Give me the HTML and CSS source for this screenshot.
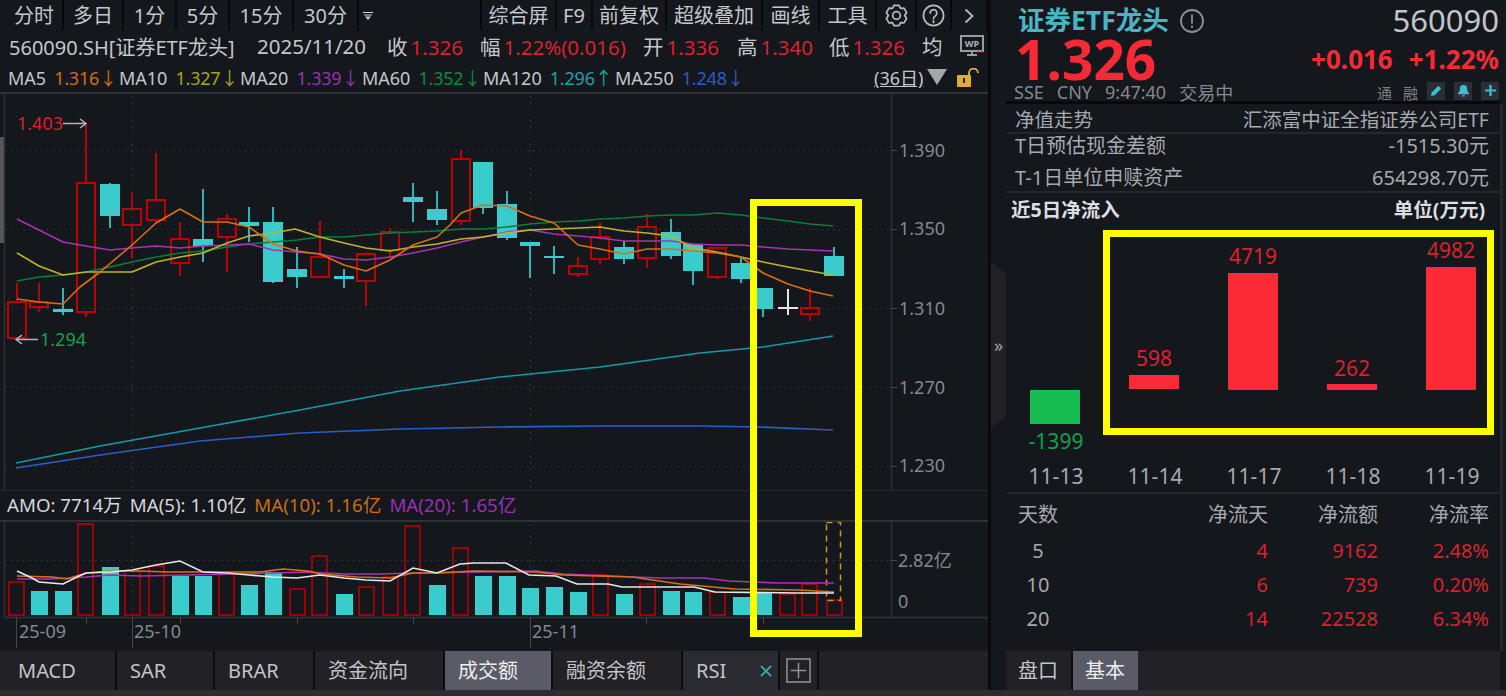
FILE: index.html
```html
<!DOCTYPE html>
<html lang="zh-CN">
<head>
<meta charset="utf-8">
<title>证券ETF龙头 560090</title>
<link rel="stylesheet" href="styles.css">
</head>
<body>
<div class="page">
  <main class="main">
    <section class="left">
      <nav class="toolbar">
        <span class="tool">分时</span><span class="tool">多日</span><span class="tool">1分</span><span class="tool">5分</span><span class="tool">15分</span><span class="tool">30分</span>
        <span class="tool tool-menu"><svg class="ico-menu" viewBox="0 0 10 8"><path d="M0 0.5h10M1 3h8"/><path class="fill" d="M2 4.5h6L5 8z"/></svg></span>
        <span class="tool tool-blank"></span>
        <span class="tool">综合屏</span><span class="tool">F9</span><span class="tool">前复权</span><span class="tool">超级叠加</span><span class="tool">画线</span><span class="tool">工具</span>
        <span class="tool"><svg class="ico-24" viewBox="0 0 24 24"><path d="M9.34 1.33L14.66 1.33 16.25 4.64 19.91 4.36 22.57 8.97 20.5 12 22.57 15.03 19.91 19.64 16.25 19.36 14.66 22.67 9.34 22.67 7.75 19.36 4.09 19.64 1.43 15.03 3.5 12 1.43 8.97 4.09 4.36 7.75 4.64z"/><circle cx="12" cy="12" r="4"/></svg></span>
        <span class="tool"><svg class="ico-24" viewBox="0 0 24 24"><circle cx="12" cy="12" r="10.5"/><path d="M8.5 9.5a3.5 3.5 0 1 1 5.4 2.9c-1.3.8-1.9 1.5-1.9 3"/><path d="M12 17.5v1.8"/></svg></span>
        <span class="tool"><svg class="ico-chev" viewBox="0 0 10 16"><path d="M1.5 1.5L8.5 8 1.5 14.5"/></svg></span>
      </nav>

      <div class="quote">
        <span class="code">560090.SH[证券ETF龙头]</span>
        <span class="date">2025/11/20</span>
        <span class="kv kv-close">收<b>1.326</b></span>
        <span class="kv kv-amp">幅<b>1.22%(0.016)</b></span>
        <span class="kv kv-open">开<b>1.336</b></span>
        <span class="kv kv-high">高<b>1.340</b></span>
        <span class="kv kv-low">低<b>1.326</b></span>
        <span class="kv kv-avg">均</span>
        <svg class="ico-wp" viewBox="0 0 24 23"><rect x="1" y="1" width="22" height="15"/><path d="M7 20h10M12 16v4"/><text x="12" y="12">WP</text><path class="wp-dots" d="M17 17h2M21 17h2"/></svg>
      </div>

      <div class="ma-row">
        <span class="ma ma-5">MA5<b>1.316↓</b></span>
        <span class="ma ma-10">MA10<b>1.327↓</b></span>
        <span class="ma ma-20">MA20<b>1.339↓</b></span>
        <span class="ma ma-60">MA60<b>1.352↓</b></span>
        <span class="ma ma-120">MA120<b>1.296↑</b></span>
        <span class="ma ma-250">MA250<b>1.248↓</b></span>
        <span class="days">(36日)</span>
        <svg class="ico-tri" viewBox="0 0 20 16"><path d="M0 0h20L10 16z"/></svg>
        <svg class="ico-lock" viewBox="0 0 23 19"><path class="shackle" d="M12 7V5a4.5 4.5 0 0 1 9 0"/><rect class="body" x="0" y="7" width="14" height="12" rx="1"/><rect class="hole" x="6" y="10" width="2" height="5"/></svg>
      </div>

      <svg class="chart-main" viewBox="0 94 988 396">
        <rect class="scroll" x="0" y="137" width="4" height="106"/>
        <path class="frame" d="M4.5 94V490M891.5 94V490"/>
        <path class="grid" d="M5 150.5H891M5 229.5H891M5 308.5H891M5 387.5H891M5 466.5H891M132.5 96V490M530.5 96V490"/>
        <path class="tick" d="M891 150.5h6M891 229.5h6M891 308.5h6M891 387.5h6M891 466.5h6"/>
        <text class="axis" x="899" y="157">1.390</text>
        <text class="axis" x="899" y="235">1.350</text>
        <text class="axis" x="899" y="315">1.310</text>
        <text class="axis" x="899" y="394">1.270</text>
        <text class="axis" x="899" y="472">1.230</text>

        <g class="c-red">
          <path d="M17 283V302M39 283V302M39 307V312M86 123V183M86 312V317M132 193V209M132 225V258M156 153V200M156 220V223M180 222V239M180 263V276M227 214V219M227 237V272M320 221V257M366 252V254M366 281V306M390 228V232M390 250V258M461 150V159M461 221V225M578 257V266M578 274V277M600 222V237M600 259V265M647 214V227M647 258V268M717 277V279M810 288V308M810 314V321"/>
          <rect x="8" y="302" width="18" height="36"/><rect x="30" y="302" width="18" height="5"/><rect x="77" y="183" width="18" height="129"/><rect x="123" y="209" width="18" height="16"/><rect x="147" y="200" width="18" height="20"/><rect x="171" y="239" width="18" height="24"/><rect x="218" y="219" width="18" height="18"/><rect x="311" y="257" width="18" height="20"/><rect x="357" y="254" width="18" height="27"/><rect x="381" y="232" width="18" height="18"/><rect x="452" y="159" width="18" height="62"/><rect x="569" y="266" width="18" height="8"/><rect x="591" y="237" width="18" height="22"/><rect x="638" y="227" width="18" height="31"/><rect x="708" y="248" width="18" height="29"/><rect x="801" y="308" width="18" height="6"/>
        </g>
        <g class="c-teal">
          <path d="M63 288V315M110 183V228M203 189V262M249 207V242M273 207V283M297 247V288M344 269V288M413 183V222M437 191V225M483 162V214M507 191V240M530 242V278M554 246V274M624 241V264M671 219V259M693 244V285M741 258V283M763 288V317M834 247V276"/>
          <rect x="53" y="309" width="20" height="3"/><rect x="100" y="184" width="20" height="32"/><rect x="193" y="239" width="20" height="7"/><rect x="239" y="222" width="20" height="4"/><rect x="263" y="222" width="20" height="60"/><rect x="287" y="269" width="20" height="8"/><rect x="334" y="276" width="20" height="3"/><rect x="403" y="197" width="20" height="5"/><rect x="427" y="209" width="20" height="11"/><rect x="473" y="162" width="20" height="46"/><rect x="497" y="204" width="20" height="34"/><rect x="520" y="242" width="20" height="4"/><rect x="544" y="256" width="20" height="2"/><rect x="614" y="247" width="20" height="12"/><rect x="661" y="232" width="20" height="24"/><rect x="683" y="244" width="20" height="27"/><rect x="731" y="263" width="20" height="16"/><rect x="753" y="288" width="20" height="21"/><rect x="824" y="256" width="20" height="20"/>
        </g>
        <path class="c-white" d="M778 308H798M788 289V315"/>

        <polyline class="l l-60" points="17,281 39,277 63,275 86,272 110,267 132,262 156,257 180,253 203,251 227,247 249,244 273,242 297,240 320,237 344,237 366,235 390,233 413,232 437,231 461,229 483,229 507,227 530,224 554,222 578,221 600,219 624,218 647,216 671,215 693,215 717,213 741,215 763,218 788,221 810,224 833,226"/>
        <polyline class="l l-20" points="17,219 39,230 63,242 86,246 110,250 132,248 156,246 180,248 203,246 227,245 249,244 273,250 297,252 320,254 344,259 366,260 390,257 413,253 437,248 461,242 483,237 507,232 530,230 554,234 578,236 600,238 624,241 647,241 671,241 693,244 717,245 741,245 763,247 788,249 810,250 833,251"/>
        <polyline class="l l-10" points="17,253 39,266 63,275 86,272 110,272 132,272 156,262 180,257 203,253 227,243 249,236 273,233 295,229 320,237 344,243 366,248 390,251 413,247 437,244 461,239 483,237 507,233 530,230 554,229 578,228 600,227 624,231 647,233 671,236 693,248 717,252 741,257 763,262 788,267 810,271 833,275"/>
        <polyline class="l l-5" points="17,299 39,302 63,304 80,287 100,272 132,245 156,223 180,209 203,222 227,222 249,227 273,244 297,251 320,254 344,265 366,271 390,260 413,245 437,237 450,225 461,213 483,205 507,206 530,216 554,223 578,245 600,249 624,254 647,249 671,249 693,251 717,253 741,257 763,273 788,284 810,291 833,296"/>
        <polyline class="l l-120" points="16,463 100,446 200,428 300,410 400,391 500,377 600,367 700,353 763,347 833,336"/>
        <polyline class="l l-250" points="16,468 100,455 200,441 300,433 400,429 500,427 600,426 700,426 760,427 833,430"/>

        <text class="mark mark-red" x="17" y="130">1.403</text>
        <path class="arrow" d="M63 123.5H86M80 119l6 4.500-6 4.500"/>
        <path class="arrow" d="M38 339.500H16M22 335l-6 4.500 6 4.500"/>
        <text class="mark mark-green" x="40" y="346">1.294</text>
      </svg>

      <div class="amo">
        <span class="amo-w">AMO: 7714万</span>
        <span class="amo-w">MA(5): 1.10亿</span>
        <span class="amo-o">MA(10): 1.16亿</span>
        <span class="amo-p">MA(20): 1.65亿</span>
      </div>

      <svg class="chart-vol" viewBox="0 522 988 129">
        <path class="frame" d="M4.5 522V617M891.5 522V617M4 617.500H988"/>
        <path class="grid" d="M5 560.500H891M132.500 524V616M530.500 524V616"/>
        <path class="tick" d="M891 560.500h6M86.500 618v6M180.500 618v6M297.500 618v6M413.500 618v6M646.500 618v6M763.500 618v6M16.500 617v31M132.500 617v31M530.500 617v31"/>
        <g class="v-red">
          <rect x="9" y="582" width="15" height="33"/><rect x="78" y="524" width="15" height="91"/><rect x="125" y="571" width="15" height="44"/><rect x="149" y="566" width="15" height="49"/><rect x="219" y="573" width="15" height="42"/><rect x="290" y="589" width="15" height="26"/><rect x="312" y="556" width="15" height="59"/><rect x="359" y="587" width="15" height="28"/><rect x="383" y="577" width="15" height="38"/><rect x="405" y="526" width="15" height="89"/><rect x="453" y="548" width="15" height="67"/><rect x="593" y="575" width="15" height="40"/><rect x="640" y="584" width="15" height="31"/><rect x="710" y="592" width="15" height="23"/><rect x="780" y="594" width="15" height="21"/><rect x="802" y="584" width="15" height="31"/><rect x="827" y="600" width="15" height="15"/>
        </g>
        <g class="v-teal">
          <rect x="31" y="591" width="17" height="24"/><rect x="55" y="591" width="17" height="24"/><rect x="102" y="567" width="17" height="48"/><rect x="172" y="576" width="17" height="39"/><rect x="195" y="576" width="17" height="39"/><rect x="241" y="585" width="17" height="30"/><rect x="265" y="572" width="17" height="43"/><rect x="336" y="594" width="17" height="21"/><rect x="429" y="585" width="17" height="30"/><rect x="475" y="576" width="17" height="39"/><rect x="499" y="576" width="17" height="39"/><rect x="522" y="588" width="17" height="27"/><rect x="546" y="587" width="17" height="28"/><rect x="570" y="592" width="17" height="23"/><rect x="616" y="594" width="17" height="21"/><rect x="663" y="591" width="17" height="24"/><rect x="685" y="592" width="17" height="23"/><rect x="733" y="597" width="17" height="18"/><rect x="755" y="592" width="17" height="23"/>
        </g>
        <rect class="v-dash" x="826.500" y="522.500" width="14" height="78"/>
        <polyline class="v v-p" points="17,579 50,579 86,577 110,575 140,576 233,574 308,572 344,574 380,574 413,573 480,572 536,571 563,574 612,576 660,578 704,578 729,581 777,583 834,583"/>
        <polyline class="v v-o" points="17,576 52,577 67,579 86,573 110,571 140,571 167,572 260,572 283,569 308,571 320,574 357,577 390,578 413,573 437,573 474,571 536,572 563,575 632,577 680,584 735,589 799,590 834,592"/>
        <polyline class="v v-w" points="17,571 32,578 39,582 63,584 77,577 86,573 110,572 132,570 156,565 180,561 203,572 227,573 249,575 273,577 297,578 320,575 344,578 366,580 390,581 413,568 437,573 460,564 474,563 506,563 529,575 556,576 577,584 608,584 622,587 694,587 715,592 799,593 834,593"/>
        <text class="axis" x="898" y="567">2.82亿</text>
        <text class="axis" x="898" y="608">0</text>
        <text class="axis" x="19" y="638">25-09</text>
        <text class="axis" x="134" y="638">25-10</text>
        <text class="axis" x="532" y="638">25-11</text>
      </svg>

      <nav class="tabs tabs-left">
        <span class="tab">MACD</span><span class="tab">SAR</span><span class="tab">BRAR</span><span class="tab">资金流向</span><span class="tab tab-on">成交额</span><span class="tab">融资余额</span>
        <span class="tab tab-rsi">RSI<svg class="ico-x" viewBox="0 0 12 12"><path d="M1 1l10 10M11 1L1 11"/></svg></span>
        <span class="tab tab-plus"><svg class="ico-plus" viewBox="0 0 26 26"><rect x="1" y="1" width="24" height="24"/><path d="M13 5v16M5 13h16"/></svg></span>
      </nav>
    </section>

    <div class="gutter">
      <div class="handle">»</div>
    </div>

    <section class="right">
      <header class="head">
        <div class="head-top">
          <h1 class="title">证券ETF龙头</h1>
          <svg class="ico-info" viewBox="0 0 24 24"><circle cx="12" cy="12" r="11"/><path d="M12 5.500v9M12 16.500v2.500"/></svg>
          <span class="symbol">560090</span>
        </div>
        <div class="head-mid">
          <span class="price">1.326</span>
          <span class="chg">+0.016</span>
          <span class="chg">+1.22%</span>
        </div>
        <div class="head-low">
          <span>SSE</span><span>CNY</span><span>9:47:40</span><span>交易中</span>
          <span class="tag tag-a">通</span><span class="tag">融</span>
          <span class="btn"><svg viewBox="0 0 14 14"><path d="M1 13l1-4 7-7 3 3-7 7z"/></svg></span>
          <span class="btn"><svg viewBox="0 0 14 14"><path d="M7 1c3 0 4 2 4 5 0 2 1 3 2 4v1H1v-1c1-1 2-2 2-4 0-3 1-5 4-5zM5.500 12h3v1.500h-3z"/></svg></span>
          <span class="btn"><svg viewBox="0 0 14 14"><path d="M5.800 1h2.400v4.800H13v2.400H8.200V13H5.800V8.200H1V5.800h4.800z"/></svg></span>
        </div>
      </header>

      <div class="sub">
        <div class="row row-nav"><span>净值走势</span><span>汇添富中证全指证券公司ETF</span></div>
        <div class="row row-a"><span>T日预估现金差额</span><span>-1515.30元</span></div>
        <div class="row row-b"><span>T-1日单位申赎资产</span><span>654298.70元</span></div>
        <div class="row row-bold"><span>近5日净流入</span><span>单位(万元)</span></div>

        <svg class="flow" viewBox="1006 225 494 267">
          <rect class="up" x="1129" y="375" width="50" height="14"/>
          <rect class="up" x="1228" y="273" width="50" height="117"/>
          <rect class="up" x="1327" y="384" width="50" height="6"/>
          <rect class="up" x="1426" y="267" width="50" height="123"/>
          <rect class="down" x="1030" y="390" width="50" height="34"/>
          <text class="val val-up" x="1154" y="366">598</text>
          <text class="val val-up" x="1253" y="264">4719</text>
          <text class="val val-up" x="1352" y="376">262</text>
          <text class="val val-up" x="1451" y="258">4982</text>
          <text class="val val-down" x="1056" y="449">-1399</text>
          <text class="day" x="1056" y="484">11-13</text>
          <text class="day" x="1155" y="484">11-14</text>
          <text class="day" x="1254" y="484">11-17</text>
          <text class="day" x="1353" y="484">11-18</text>
          <text class="day" x="1452" y="484">11-19</text>
        </svg>

        <div class="table">
          <span class="th first">天数</span><span class="th">净流天</span><span class="th">净流额</span><span class="th">净流率</span>
          <span class="td first">5</span><span class="td">4</span><span class="td">9162</span><span class="td">2.48%</span>
          <span class="td first">10</span><span class="td">6</span><span class="td">739</span><span class="td">0.20%</span>
          <span class="td first">20</span><span class="td">14</span><span class="td">22528</span><span class="td">6.34%</span>
        </div>
      </div>

      <nav class="tabs tabs-right">
        <span class="tab">盘口</span><span class="tab tab-on">基本</span>
      </nav>
    </section>
  </main>
  <div class="strip"></div>

  <div class="note note-left"></div>
  <div class="note note-right"></div>
</div>
</body>
</html>
```

FILE: styles.css
```css
* { box-sizing: border-box; }
html, body { margin: 0; padding: 0; }
body {
  width: 1506px;
  height: 696px;
  overflow: hidden;
  background: #14171c;
  color: #c4c7cc;
  font-family: "Noto Sans", "Noto Sans CJK SC", sans-serif;
}
.page { position: relative; width: 1506px; height: 696px; display: flex; flex-direction: column; }
.main { display: flex; height: 690px; }
.strip { height: 6px; background: #2b2d33; }

/* left column */
.left { width: 988px; display: flex; flex-direction: column; }
.toolbar {
  height: 30px;
  display: grid;
  grid-template-columns: 64px 60px 53px 53px 64px 65px 18px 105px 75px 36px 74px 96px 57px 57px 40px 35px 36px;
  font-size: 20px;
  color: #c4c7cc;
}
.tool {
  display: flex; align-items: center; justify-content: center;
  border-right: 2px solid #08090b;
  line-height: 1;
  padding-top: 1px;
  white-space: nowrap;
}
.tool:first-child { padding-left: 6px; }
.tool-menu { border-right: 0; }
.ico-menu { width: 10px; height: 8px; }
.ico-menu path { stroke: #d0d0d0; fill: none; stroke-width: 1; }
.ico-menu path.fill { fill: #d0d0d0; stroke: none; }
.ico-24 { width: 23px; height: 23px; fill: none; stroke: #b8babd; stroke-width: 1.800; stroke-linejoin: round; stroke-linecap: round; }
.ico-chev { width: 10px; height: 16px; fill: none; stroke: #b8babd; stroke-width: 1.800; }

.quote {
  height: 32px; display: flex; align-items: center; font-size: 20.500px; padding-left: 9px; white-space: nowrap;
}
.quote b, .ma b { font-weight: 400; }
.quote b { color: #d9212c; margin-left: 3px; }
.code { width: 248px; font-size: 20px; }
.date { width: 130px; }
.kv { display: block; }
.kv-close { width: 93px; }
.kv-amp { width: 163px; }
.kv-open { width: 94px; }
.kv-high { width: 92px; }
.kv-low { width: 93px; }
.kv-avg { width: 38px; }
.ico-wp { width: 24px; height: 23px; fill: none; stroke: #9a9ca0; stroke-width: 2; }
.ico-wp text { font-size: 9px; font-weight: 700; fill: #b0b2b5; stroke: none; text-anchor: middle; }
.ico-wp .wp-dots { stroke: #c8252c; stroke-width: 1.500; }

.ma-row {
  height: 32px; display: flex; align-items: center; font-size: 18px; padding-left: 8px; white-space: nowrap;
  border-bottom: 2px solid #2f3136;
}
.ma { display: block; }
.ma b { margin-left: 8px; letter-spacing: -0.200px; }
.ma-5 { width: 111px; }
.ma-5 b { color: #d26f0c; }
.ma-10 { width: 121px; }
.ma-10 b { color: #a9a51e; }
.ma-20 { width: 122px; }
.ma-20 b { color: #9a2fb6; }
.ma-60 { width: 121px; }
.ma-60 b { color: #0b8a3f; }
.ma-120 { width: 132px; }
.ma-120 b { color: #12a5a8; }
.ma-250 { width: 259px; }
.ma-250 b { color: #2a5cc6; }
.days { width: 53px; text-decoration: underline; }
.ico-tri { width: 20px; height: 16px; fill: #a5a6a8; }
.ico-lock { width: 23px; height: 19px; margin-left: 10px; }
.ico-lock .shackle { fill: none; stroke: #e2aa36; stroke-width: 1.800; }
.ico-lock .body { fill: #e2aa36; }
.ico-lock .hole { fill: #2a2416; }

.chart-main { display: block; width: 988px; height: 396px; }
.chart-vol { display: block; width: 988px; height: 129px; }
.scroll { fill: #55565e; }
.frame { stroke: #2f3136; stroke-width: 1.500; fill: none; }
.grid { stroke: #3a3d42; stroke-width: 1; stroke-dasharray: 1.500 4.500; fill: none; }
.tick { stroke: #44474c; stroke-width: 1; fill: none; }
.axis { font-size: 18px; fill: #85888e; }

.c-red rect { fill: none; stroke: #bd0000; stroke-width: 2; }
.c-red path { stroke: #bd0000; stroke-width: 2; fill: none; }
.c-teal rect { fill: #3acccd; stroke: none; }
.c-teal path { stroke: #2fb3b6; stroke-width: 2; fill: none; }
.c-white { stroke: #e4e4e4; stroke-width: 2; fill: none; }

.l { fill: none; stroke-width: 1.600; stroke-linejoin: round; }
.l-5 { stroke: #d8720f; }
.l-10 { stroke: #c0b32a; }
.l-20 { stroke: #a833b0; }
.l-60 { stroke: #0a7d3a; }
.l-120 { stroke: #129aa8; }
.l-250 { stroke: #2a5ec8; }

.mark { font-size: 18px; }
.mark-red { fill: #d9212c; }
.mark-green { fill: #12a04c; }
.arrow { stroke: #b4b4b4; stroke-width: 1.500; fill: none; }

.amo {
  height: 32px; display: flex; align-items: center; font-size: 18.700px; gap: 8px; padding: 0 0 4px 7px;
  border-top: 1px solid #25272c; border-bottom: 2px solid #2f3136; white-space: nowrap;
}
.amo-w { color: #d4d7db; }
.amo-o { color: #c8700c; }
.amo-p { color: #9a2fb6; }

.v-red rect { fill: none; stroke: #c00000; stroke-width: 1.500; }
.v-teal rect { fill: #3acccd; }
.v-dash { fill: none; stroke: #cf9420; stroke-width: 1.500; stroke-dasharray: 6 5; }
.v { fill: none; stroke-width: 1.600; }
.v-w { stroke: #e8e8e8; }
.v-o { stroke: #d8720f; }
.v-p { stroke: #a833b0; }

.tabs { height: 39px; display: grid; background: #222226; font-size: 20px; color: #c2c5c9; }
.tabs-left { grid-template-columns: 117px 98px 100px 130px 108px 130px 97px 39px 1fr; }
.tab {
  display: flex; align-items: center; padding-left: 13px; white-space: nowrap;
  border-right: 2px solid #0b0c0e;
  line-height: 1;
}
.tab:first-child { padding-left: 18px; }
.tab-on { background: #5a5b66; color: #eceded; }
.tab-rsi { background: #2a2b30; justify-content: space-between; padding-right: 6px; }
.tab-plus { padding: 0; justify-content: center; }
.ico-x { width: 12px; height: 12px; stroke: #3aa7b0; stroke-width: 1.800; fill: none; }
.ico-plus { width: 25px; height: 25px; fill: none; stroke: #8f9195; stroke-width: 1.600; }

/* gutter */
.gutter { width: 18px; display: flex; align-items: center; border-left: 3px solid #090a0c; }
.handle {
  width: 15px; height: 166px; background: #222226; color: #a0a2a6; font-size: 18px; line-height: 166px; text-align: center;
  clip-path: polygon(0 0, 100% 7%, 100% 93%, 0 100%);
}

/* right column */
.right { width: 500px; display: flex; flex-direction: column; }
.head { width: 494px; height: 104px; border-bottom: 3px solid #08090b; padding: 0 1px 0 10px; }
.head-top { height: 38px; display: flex; align-items: center; padding-top: 3px; }
.title { margin: 0 0 0 2px; font-size: 26.500px; font-weight: 700; color: #4cb3c6; line-height: 1; white-space: nowrap; }
.ico-info { width: 24px; height: 24px; margin-left: 11px; fill: none; stroke: #8f9195; stroke-width: 1.800; }
.symbol { margin-left: auto; font-size: 31px; color: #c2c5c9; line-height: 1; }
.head-mid { height: 42px; display: flex; align-items: center; color: #f52a36; }
.price { font-size: 55px; font-weight: 700; line-height: 42px; margin: 0 auto 0 -1px; }
.chg { font-size: 26px; font-weight: 700; margin-left: 16px; line-height: 1; }
.head-low { height: 21px; display: flex; align-items: center; gap: 13px; font-size: 18px; color: #85888e; padding-top: 3px; margin-left: -2px; }
.head-low .tag { font-size: 15px; color: #7d8086; }
.head-low .tag-a { margin-left: auto; margin-right: -2px; }
.btn { width: 18px; height: 18px; background: #2b2e34; display: flex; align-items: center; justify-content: center; margin: -3px 0 0 -4px; }
.btn svg { width: 13px; height: 13px; fill: #36c3d0; }

.sub { width: 497px; flex: 1; display: flex; flex-direction: column; border-right: 3px solid #25272c; }
.row { display: flex; justify-content: space-between; align-items: center; font-size: 20px; color: #a6a9ae; padding: 0 11px 0 9px; white-space: nowrap; line-height: 1; }
.row-nav { height: 30px; border-bottom: 2px solid #25272c; padding-top: 3px; font-size: 19.500px; }
.row-a { height: 24px; }
.row-b { height: 35px; border-bottom: 2px solid #25272c; padding-top: 7px; }
.row-bold { height: 32px; font-weight: 700; color: #dcdee1; padding: 2px 15px 0 5px; font-size: 19.500px; }
.flow { display: block; width: 494px; height: 267px; flex: none; }
.up { fill: #fc2a36; }
.down { fill: #16bd50; }
.val { font-size: 21px; text-anchor: middle; }
.val-up { fill: #d9212c; }
.val-down { fill: #12a04c; }
.day { font-size: 21px; text-anchor: middle; fill: #a6a9ae; }

.table {
  display: grid;
  grid-template-columns: 52px 210px 110px 111px;
  grid-template-rows: 36px 34px 34px 34px;
  padding-top: 4px;
  font-size: 20px;
  border-top: 2px solid #25272c;
}
.th, .td { display: flex; align-items: center; justify-content: flex-end; line-height: 1; }
.th { color: #a6a9ae; padding-bottom: 3px; }
.td { color: #d9212c; }
.th.first { color: #a6a9ae; padding-left: 12px; }
.td.first { color: #a6a9ae; padding-left: 12px; justify-content: center; }

.tabs-right { width: 494px; grid-template-columns: 67px 65px 1fr; }
.tabs-right .tab { padding-left: 12px; }
.tabs-right .tab:nth-child(2) { border-right: 0; }

/* annotation boxes drawn over the picture */
.note { position: absolute; border: 7px solid #ffff00; pointer-events: none; }
.note-left { left: 750px; top: 199px; width: 112px; height: 438px; }
.note-right { left: 1103px; top: 230px; width: 391px; height: 205px; }
```
